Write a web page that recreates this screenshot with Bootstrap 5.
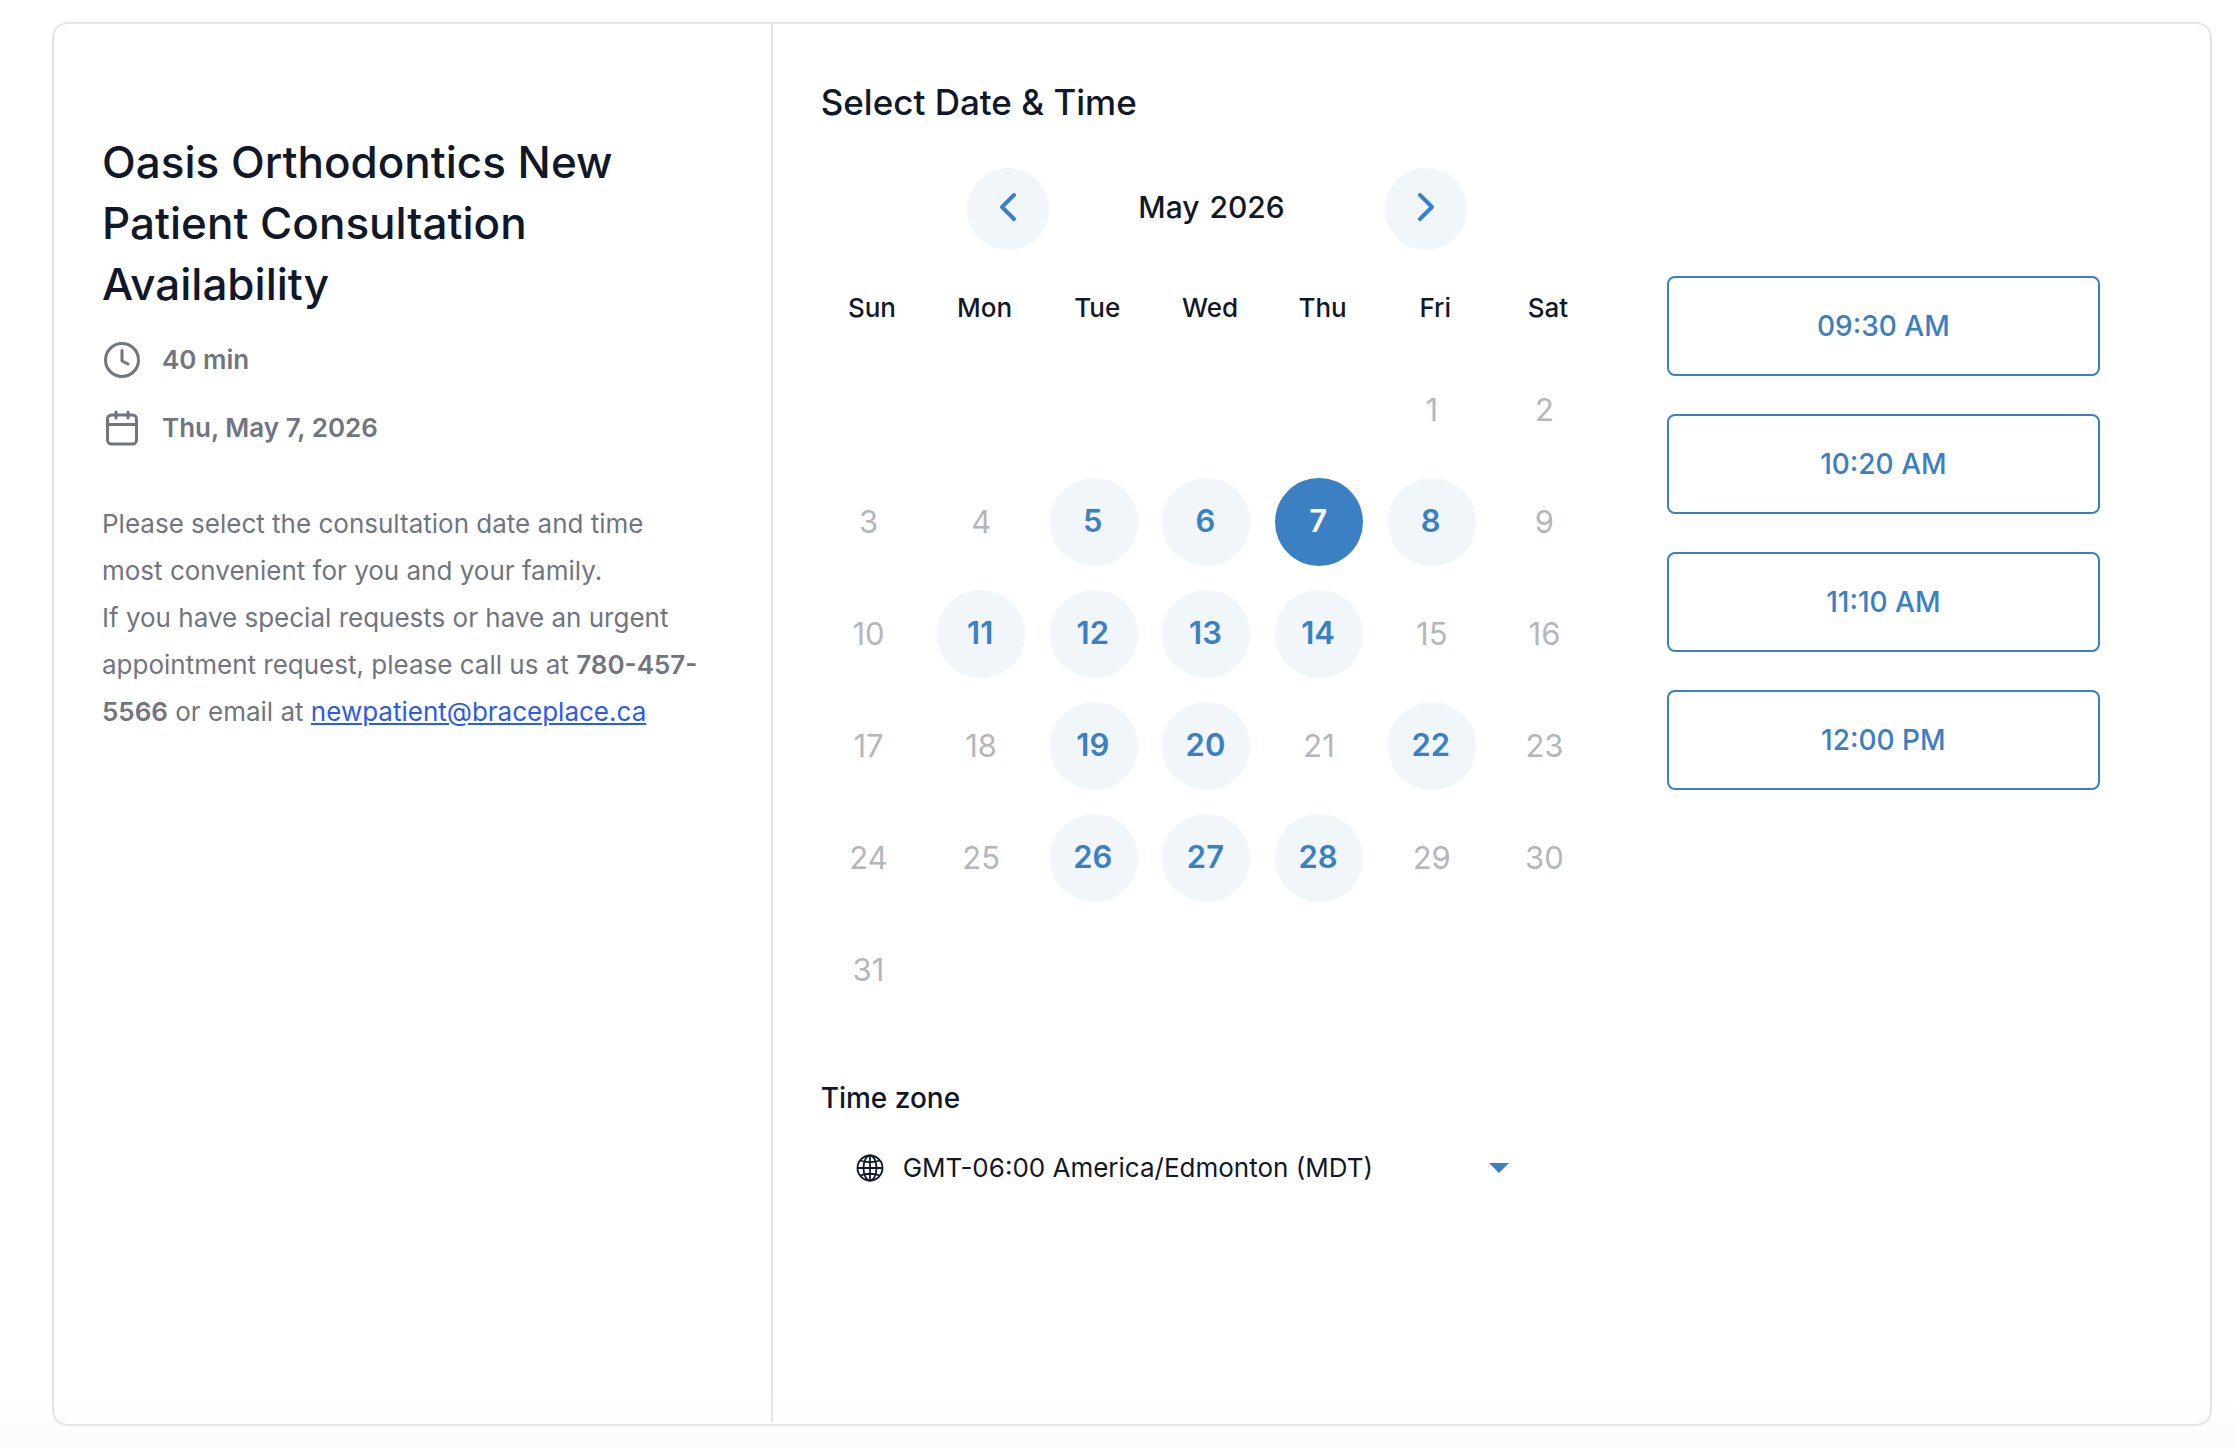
<!DOCTYPE html>
<html lang="en">
<head>
<meta charset="utf-8">
<meta name="viewport" content="width=device-width, initial-scale=1">
<title>Oasis Orthodontics New Patient Consultation Availability</title>
<link href="https://cdn.jsdelivr.net/npm/bootstrap@5.3.0/dist/css/bootstrap.min.css" rel="stylesheet">
<style>
:root { --brand: #3a80c2; --tint: #f0f6fa; --ink: #111827; --soft: #70757f; --line: #e5e5e5; }
body { font-family: Inter, "Liberation Sans", sans-serif; font-size: 26px; color: var(--ink); background: linear-gradient(#fff calc(100% - 50px), #fbfbfb); padding: 22px 24px 22px 52px; min-height: 100vh; display: flex; }
.booking { border: 2px solid var(--line); border-radius: 16px; }
.about { border-right: 2px solid var(--line); padding: 108px 62px 48px 48px; margin-bottom: 2px; }
.about h1 { font-size: 44px; font-weight: 500; line-height: 61px; margin-bottom: 25px; }
.fact { color: var(--soft); font-weight: 600; gap: 20px; line-height: 40px; margin-bottom: 28px; }
.about p { color: var(--soft); line-height: 47px; margin-top: 52px; margin-bottom: 0; }
.about p strong { font-weight: 600; }
.about p a { color: #2b5bea; }
.picker { padding: 58px 48px; }
.picker h2 { font-size: 35px; font-weight: 500; line-height: 40px; margin-bottom: 46px; }
.calendar { width: 58.8%; margin-left: -5px; }
.month-bar { padding-left: 14px; margin-bottom: 10px; }
.month-name { font-size: 30px; font-weight: 500; line-height: 36px; width: 336px; gap: 10px; padding: 0 11px 4px 0; }
.round { width: 88px; height: 88px; border: 0; border-radius: 50%; background: transparent; color: #b5b6bc; font-size: 31px; padding: 0; }
.round.open { background: var(--tint); color: var(--brand); font-weight: 600; padding: 0 2px 2px 0; }
.round.open.chosen { background: var(--brand); color: #fff; }
.round.step { width: 82px; height: 82px; padding: 0 0 4px; }
.round.step svg { display: block; margin: 0 auto; }
.days { table-layout: fixed; width: 100%; }
.days th { height: 94px; text-align: center; font-weight: 500; }
.days td { height: 112px; padding: 0 7px 0 0; text-align: center; vertical-align: middle; }
.slots { width: 32.3%; margin-top: 108px; margin-right: 62px; gap: 38px; }
.slot { height: 100px; border: 2px solid var(--brand); border-radius: 8px; color: var(--brand); background: #fff; font-size: 28px; font-weight: 500; padding: 0; }
.slot:hover { background: var(--brand); color: #fff; }
.zone { margin-top: 50px; }
.zone label { font-size: 28px; font-weight: 500; line-height: 44px; margin-bottom: 26px; }
.zone-field { padding-left: 35px; gap: 19px; }
.zone-field select { appearance: none; color: var(--ink); width: 567px; line-height: 44px; }
</style>
<script src="https://cdn.jsdelivr.net/npm/bootstrap@5.3.0/dist/js/bootstrap.bundle.min.js"></script>
</head>
<body>
<main class="booking d-flex w-100">
  <section class="about col-4">
    <h1>Oasis Orthodontics New Patient Consultation Availability</h1>
    <div class="fact d-flex align-items-center">
      <svg width="40" height="40" viewBox="0 0 40 40" fill="none" stroke="currentColor" stroke-width="3" stroke-linecap="round" stroke-linejoin="round" aria-hidden="true"><circle cx="20" cy="20" r="16.500"/><path d="M20 10.500v10.500l6 3"/></svg>
      <span>40 min</span>
    </div>
    <div class="fact d-flex align-items-center">
      <svg width="40" height="40" viewBox="0 0 40 40" fill="none" stroke="currentColor" stroke-width="3" stroke-linecap="round" stroke-linejoin="round" aria-hidden="true"><rect x="5.500" y="7" width="29" height="29" rx="4"/><path d="M6 16.500h28M14 4v6M26 4v6"/></svg>
      <span>Thu, May 7, 2026</span>
    </div>
    <p>Please select the consultation date and time most convenient for you and your family.<br>If you have special requests or have an urgent appointment request, please call us at <strong>780-457-5566</strong> or email at <a href="mailto:newpatient@braceplace.ca">newpatient@braceplace.ca</a></p>
  </section>

  <section class="picker flex-grow-1">
    <h2>Select Date &amp; Time</h2>
    <div class="d-flex justify-content-between align-items-start">
      <div class="calendar">
        <div class="month-bar d-flex justify-content-center align-items-center">
          <button type="button" class="round open step" aria-label="Previous month"><svg width="20" height="30" viewBox="0 0 20 30" fill="none" stroke="currentColor" stroke-width="4" stroke-linecap="round" stroke-linejoin="round"><path d="M16 3L4 15l12 12"/></svg></button>
          <div class="month-name d-flex justify-content-center"><span>May</span><span>2026</span></div>
          <button type="button" class="round open step" aria-label="Next month"><svg width="20" height="30" viewBox="0 0 20 30" fill="none" stroke="currentColor" stroke-width="4" stroke-linecap="round" stroke-linejoin="round"><path d="M4 3l12 12L4 27"/></svg></button>
        </div>
        <table class="days">
          <thead><tr><th scope="col">Sun</th><th scope="col">Mon</th><th scope="col">Tue</th><th scope="col">Wed</th><th scope="col">Thu</th><th scope="col">Fri</th><th scope="col">Sat</th></tr></thead>
          <tbody>
            <tr><td></td><td></td><td></td><td></td><td></td>
              <td><button class="round" disabled>1</button></td>
              <td><button class="round" disabled>2</button></td></tr>
            <tr><td><button class="round" disabled>3</button></td>
              <td><button class="round" disabled>4</button></td>
              <td><button class="round open">5</button></td>
              <td><button class="round open">6</button></td>
              <td><button class="round open chosen" aria-pressed="true">7</button></td>
              <td><button class="round open">8</button></td>
              <td><button class="round" disabled>9</button></td></tr>
            <tr><td><button class="round" disabled>10</button></td>
              <td><button class="round open">11</button></td>
              <td><button class="round open">12</button></td>
              <td><button class="round open">13</button></td>
              <td><button class="round open">14</button></td>
              <td><button class="round" disabled>15</button></td>
              <td><button class="round" disabled>16</button></td></tr>
            <tr><td><button class="round" disabled>17</button></td>
              <td><button class="round" disabled>18</button></td>
              <td><button class="round open">19</button></td>
              <td><button class="round open">20</button></td>
              <td><button class="round" disabled>21</button></td>
              <td><button class="round open">22</button></td>
              <td><button class="round" disabled>23</button></td></tr>
            <tr><td><button class="round" disabled>24</button></td>
              <td><button class="round" disabled>25</button></td>
              <td><button class="round open">26</button></td>
              <td><button class="round open">27</button></td>
              <td><button class="round open">28</button></td>
              <td><button class="round" disabled>29</button></td>
              <td><button class="round" disabled>30</button></td></tr>
            <tr><td><button class="round" disabled>31</button></td>
              <td></td><td></td><td></td><td></td><td></td><td></td></tr>
          </tbody>
        </table>
      </div>
      <div class="slots d-flex flex-column">
        <button type="button" class="slot">09:30 AM</button>
        <button type="button" class="slot">10:20 AM</button>
        <button type="button" class="slot">11:10 AM</button>
        <button type="button" class="slot">12:00 PM</button>
      </div>
    </div>
    <div class="zone">
      <label class="d-block" for="tz">Time zone</label>
      <div class="zone-field d-flex align-items-center">
        <svg width="28" height="28" viewBox="0 0 28 28" fill="none" stroke="currentColor" stroke-width="1.800" aria-hidden="true"><circle cx="14" cy="14" r="12.500"/><ellipse cx="14" cy="14" rx="6.500" ry="12.500"/><path d="M14 1.500v25M1.500 14h25M4 6.500q10 3.500 20 0M4 21.500q10-3.500 20 0"/></svg>
        <select id="tz" class="border-0 bg-transparent p-0">
          <option>GMT-06:00 America/Edmonton (MDT)</option>
        </select>
        <svg width="20" height="10" viewBox="0 0 20 10" fill="#3a80c2" aria-hidden="true"><path d="M0 0h20L10 10z"/></svg>
      </div>
    </div>
  </section>
</main>
</body>
</html>
